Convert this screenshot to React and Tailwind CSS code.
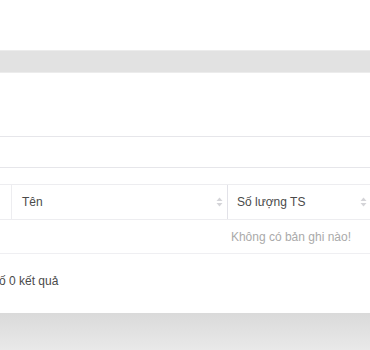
export default function App() {
  const Sort = () => (
    <svg width="7" height="10" viewBox="0 0 7 10" className="shrink-0">
      <path d="M3.5 0.5 L6.5 4 L0.5 4 Z" fill="#d4d4d8" />
      <path d="M3.5 9.5 L6.5 6 L0.5 6 Z" fill="#d4d4d8" />
    </svg>
  );
  return (
    <div className="w-[370px] h-[350px] overflow-hidden bg-white text-[12px] text-[#4a4a4a]" style={{ fontFamily: '"Liberation Sans", Arial, sans-serif' }}>
      <div className="h-[50px]" />
      <div className="h-[23px] bg-[#e2e2e2] border-y border-[#ececec]" />
      <div className="h-[240px] flex flex-col">
        <div className="h-[64px] border-b border-[#e6e6ea]" />
        <div className="h-[31px] border-b border-[#e6e6ea]" />
        <div className="h-[16px]" />
        <div className="flex h-[36px] border-y border-[#ededf0]">
          <div className="w-[12px] border-r border-[#ededf0]" />
          <div className="w-[216px] flex items-center justify-between pl-[10px] pr-[4px] border-r border-[#e2e2e8]">
            <span>Tên</span>
            <Sort />
          </div>
          <div className="flex-1 flex items-center justify-between pl-[9px] pr-[3px]">
            <span>Số lượng TS</span>
            <Sort />
          </div>
        </div>
        <div className="h-[34px] flex items-center justify-end pr-[19px] border-b border-[#efeff2] text-[#aaaaaa]">
          Không có bản ghi nào!
        </div>
        <div className="h-[54px] flex items-center -ml-[1px]">ố 0 kết quả</div>
      </div>
      <div className="h-[37px] bg-gradient-to-b from-[#dadada] to-[#e9e9e9]" />
    </div>
  );
}
